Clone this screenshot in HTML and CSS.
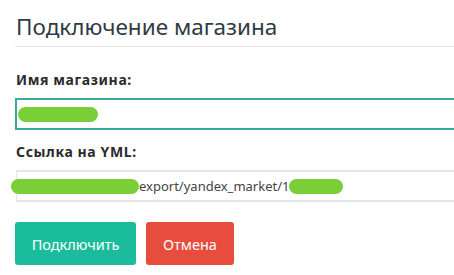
FILE: index.html
```html
<!DOCTYPE html>
<html lang="ru">
<head>
<meta charset="utf-8">
<link rel="stylesheet" href="styles.css">
</head>
<body>
<div class="panel">
  <h1 class="title">Подключение магазина</h1>
  <div class="field">
    <label class="label">Имя магазина:</label>
    <div class="input input-focus"><span class="blob blob-name"></span></div>
  </div>
  <div class="field">
    <label class="label">Ссылка на YML:</label>
    <div class="input input-plain"><span class="blob blob-a"></span><span class="url">export/yandex_market/1</span><span class="blob blob-b"></span></div>
  </div>
  <div class="actions">
    <button class="btn btn-ok">Подключить</button>
    <button class="btn btn-cancel">Отмена</button>
  </div>
</div>
</body>
</html>
```
FILE: styles.css
```css
html, body {
  margin: 0;
  padding: 0;
  background: #ffffff;
  overflow: hidden;
}
body {
  width: 454px;
  height: 275px;
  font-family: "Noto Sans", "Open Sans", sans-serif;
  color: #333;
}
.panel {
  box-sizing: border-box;
  padding-left: 15px;
  width: 454px;
}
.title {
  margin: 0;
  padding: 14px 0 6px 1px;
  font-size: 22.5px;
  font-weight: 400;
  line-height: 26px;
  color: #2f3a44;
  border-bottom: 1px solid #e6e6e6;
}
.field {
  margin-top: 24px;
}
.field + .field {
  margin-top: 13px;
}
.label {
  display: block;
  margin-left: 1px;
  font-size: 14px;
  letter-spacing: 0.6px;
  font-weight: 700;
  line-height: 18px;
  color: #2b2b2b;
  margin-bottom: 9px;
}
.input {
  box-sizing: border-box;
  height: 32px;
  display: flex;
  align-items: center;
  font-size: 13px;
  color: #444;
}
.input-focus {
  border: 2px solid #3aaa99;
  border-right: 0;
  padding-left: 1px;
}
.input-plain {
  border: 2px solid #e1e6ea;
  border-left-width: 1px;
  border-right: 0;
  margin-left: 1px;
}
.blob {
  display: inline-block;
  height: 15px;
  border-radius: 8px;
  background: #7ace38;
  flex: none;
}
.blob-name {
  width: 80px;
}
.blob-a {
  width: 128px;
  margin-left: -6px;
}
.blob-b {
  width: 54px;
}
.actions {
  display: flex;
  gap: 10px;
  margin-top: 20px;
}
.btn {
  height: 43px;
  border: 0;
  border-radius: 3px;
  color: #fff;
  font-family: "Noto Sans", "Open Sans", sans-serif;
  font-size: 14.5px;
  padding: 0;
}
.btn-ok {
  width: 121px;
  background: #1abc9c;
}
.btn-cancel {
  width: 88px;
  background: #e74c3c;
}
```
